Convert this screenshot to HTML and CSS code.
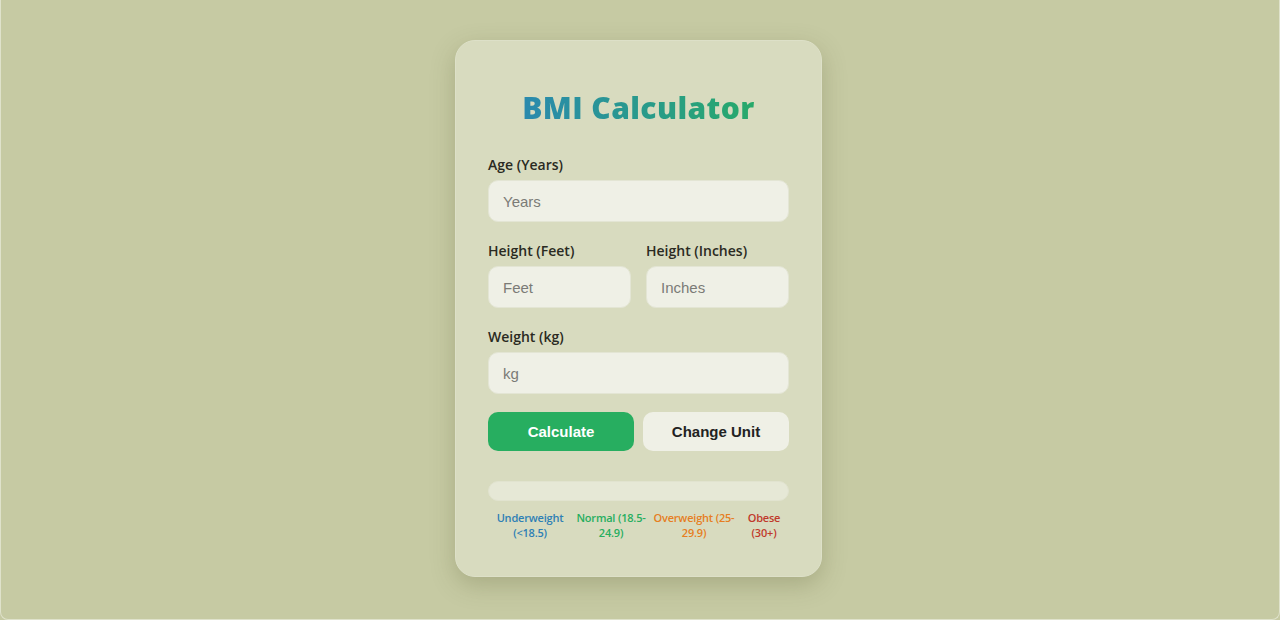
FILE: index.html
```html
<!DOCTYPE html>
<html lang="en">
<head>
<meta charset="utf-8">
<title>BMI Calculator</title>
<link rel="stylesheet" href="styles.css">
</head>
<body>
<div class="page">
  <div class="card">
    <h1 class="title">BMI Calculator</h1>
    <div class="field">
      <label class="label">Age (Years)</label>
      <input class="input" type="text" placeholder="Years">
    </div>
    <div class="row">
      <div class="field">
        <label class="label">Height (Feet)</label>
        <input class="input" type="text" placeholder="Feet">
      </div>
      <div class="field">
        <label class="label">Height (Inches)</label>
        <input class="input" type="text" placeholder="Inches">
      </div>
    </div>
    <div class="field">
      <label class="label">Weight (kg)</label>
      <input class="input" type="text" placeholder="kg">
    </div>
    <div class="buttons">
      <button class="btn btn-primary">Calculate</button>
      <button class="btn btn-secondary">Change Unit</button>
    </div>
    <div class="bar"></div>
    <div class="legend">
      <span class="under">Underweight (&lt;18.5)</span>
      <span class="normal">Normal (18.5-24.9)</span>
      <span class="over">Overweight (25-29.9)</span>
      <span class="obese">Obese (30+)</span>
    </div>
  </div>
</div>
</body>
</html>
```
FILE: styles.css
```css
* { box-sizing: border-box; }
html, body { margin: 0; padding: 0; }
body { background: #c6caa3; }
.page {
  height: 620px;
  border: 1px solid #dfe2cb;
  border-top: none;
  border-radius: 0 0 8px 8px;
  background: #c6caa3;
  display: flex;
  justify-content: center;
  align-items: flex-start;
  padding: 40px 3px 0 0;
}
.card {
  width: 367px;
  height: 537px;
  background: #d8dbbf;
  border-radius: 20px;
  box-shadow: 0 8px 24px rgba(90, 95, 50, 0.28);
  border: 1px solid #dde0c8;
  padding: 48px 32px 33px;
  display: flex;
  flex-direction: column;
}
.title {
  margin: 0 0 29px;
  text-align: center;
  font-family: "Open Sans", "Noto Sans", sans-serif;
  font-weight: 800;
  font-size: 30px;
  line-height: 38px;
  letter-spacing: 0.4px;
  background: linear-gradient(90deg, #2b85b8 0%, #27ae60 100%);
  -webkit-background-clip: text;
  background-clip: text;
  color: transparent;
}
.field { display: flex; flex-direction: column; margin-bottom: 20px; }
.label {
  font-family: "Open Sans", "Noto Sans", sans-serif;
  font-size: 14px;
  font-weight: 600;
  color: #2a2a22;
  line-height: 18px;
  margin-bottom: 6px;
}
.input {
  height: 42px;
  border: 1.5px solid #e3e5d4;
  background: #eff0e6;
  border-radius: 10px;
  padding: 0 14px;
  font-family: "Liberation Sans", Arial, sans-serif;
  font-size: 15px;
  color: #333;
  outline: none;
  width: 100%;
}
.input::placeholder { color: #7b7b76; }
.row { display: grid; grid-template-columns: 1fr 1fr; gap: 15px; }
.buttons { display: grid; grid-template-columns: 1fr 1fr; gap: 9px; margin-top: -2px; }
.btn {
  height: 39px;
  border: none;
  border-radius: 10px;
  font-family: "Liberation Sans", Arial, sans-serif;
  font-size: 15px;
  font-weight: 700;
}
.btn-primary { background: #27ae60; color: #fff; }
.btn-secondary { background: #eff0e6; color: #222; }
.bar {
  margin-top: 30px;
  height: 20px;
  border-radius: 10px;
  background: #e6e8d6;
  border: 1px solid #e1e3cf;
}
.legend {
  margin-top: 9px;
  display: flex;
  justify-content: flex-start;
  font-family: "Open Sans", "Noto Sans", sans-serif;
  font-size: 11px;
  font-weight: 600;
  line-height: 15px;
  text-align: center;
  padding: 0 0 0 4px;
  letter-spacing: -0.2px;
}
.legend span { display: block; flex: none; }
.under { color: #2e7fb5; width: 76px; }
.normal { color: #27ae60; width: 74px; margin-left: 6px; }
.over { color: #e67e22; width: 86px; margin-left: 3px; }
.obese { color: #c0392b; width: 38px; margin-left: 8px; }
```
